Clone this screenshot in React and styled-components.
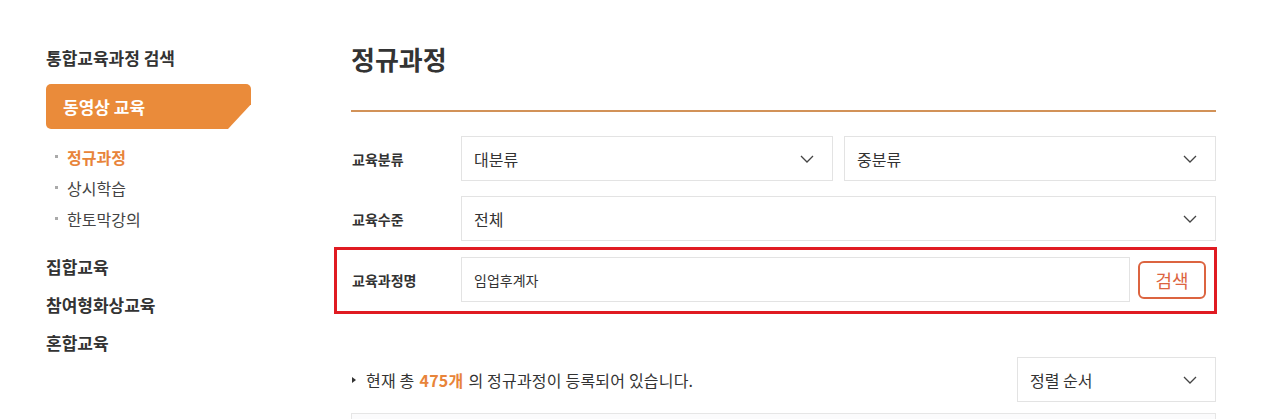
import React from "react";
import styled, { createGlobalStyle } from "styled-components";

const GlobalStyle = createGlobalStyle`
  html, body {
    margin: 0;
    padding: 0;
    background: #fff;
    font-family: "Noto Sans CJK KR", "Noto Sans", sans-serif;
    color: #333;
  }
  * { box-sizing: border-box; }
`;

const Page = styled.div`
  display: flex;
  padding: 40px 0 0 46px;
  height: 419px;
  overflow: hidden;
`;

const Sidebar = styled.aside`
  width: 305px;
  flex-shrink: 0;
`;

const SideTitle = styled.div`
  font-size: 17px;
  font-weight: 700;
  color: #333;
  line-height: 36px;
`;

const ActiveMenu = styled.div`
  width: 205px;
  height: 45px;
  margin-top: 8px;
  padding-left: 17px;
  display: flex;
  align-items: center;
  background: #ea8b3a;
  color: #fff;
  font-size: 17px;
  font-weight: 700;
  border-radius: 5px;
  clip-path: polygon(0 0, 100% 0, 100% 45%, calc(100% - 23px) 100%, 0 100%);
`;

const SubList = styled.ul`
  list-style: none;
  margin: 12px 0 14px;
  padding: 0 0 0 9px;
`;

const SubItem = styled.li`
  display: flex;
  align-items: center;
  height: 31px;
  font-size: 16px;
  font-weight: ${(p) => (p.$active ? 700 : 400)};
  color: ${(p) => (p.$active ? "#e8843a" : "#444")};

  &::before {
    content: "";
    width: 3px;
    height: 3px;
    background: #aaa;
    margin-right: 9px;
  }
`;

const MenuItem = styled.div`
  font-size: 17px;
  font-weight: 700;
  color: #333;
  line-height: 38px;
`;

const Main = styled.main`
  width: 865px;
  flex-shrink: 0;
`;

const Title = styled.h2`
  margin: 0;
  font-size: 26px;
  font-weight: 700;
  color: #333;
  line-height: 38px;
  padding-bottom: 32px;
  border-bottom: 2px solid #d29258;
`;

const Form = styled.div`
  display: flex;
  flex-direction: column;
  gap: 15px;
  margin-top: 24px;
`;

const Row = styled.div`
  display: flex;
  align-items: center;
`;

const HighlightRow = styled(Row)`
  margin: -9px -1px 0 -17px;
  padding: 7px 8px 9px 14px;
  border: 3px solid #e01b22;
`;

const Label = styled.div`
  width: 110px;
  flex-shrink: 0;
  padding-left: 1px;
  font-size: 14px;
  font-weight: 700;
  color: #333;
`;

const Fields = styled.div`
  flex: 1;
  display: grid;
  grid-template-columns: ${(p) => (p.$split ? "1fr 1fr" : "1fr")};
  gap: 11px;
`;

const SelectBox = styled.div`
  height: 45px;
  width: ${(p) => p.$width || "auto"};
  border: 1px solid #e3e3e3;
  display: flex;
  align-items: center;
  justify-content: space-between;
  padding: 0 18px 0 12px;
  font-size: 16px;
  color: #333;
  background: #fff;
`;

const Input = styled.div`
  flex: 1;
  height: 45px;
  border: 1px solid #e3e3e3;
  display: flex;
  align-items: center;
  padding-left: 12px;
  font-size: 14px;
  color: #333;
`;

const SearchButton = styled.button`
  width: 68px;
  height: 38px;
  margin-left: 8px;
  border: 2px solid #dc6440;
  border-radius: 6px;
  background: #fff;
  color: #dc6440;
  font-family: inherit;
  font-size: 18px;
  padding: 0;
  cursor: pointer;
`;

const CountBar = styled.div`
  display: flex;
  align-items: center;
  justify-content: space-between;
  margin-top: 43px;
`;

const CountText = styled.div`
  display: flex;
  align-items: center;
  font-size: 16px;
  color: #333;
  letter-spacing: 0.2px;

  &::before {
    content: "";
    border-left: 4px solid #333;
    border-top: 3.5px solid transparent;
    border-bottom: 3.5px solid transparent;
    margin: 0 10px 0 1px;
  }
`;

const Strong = styled.b`
  color: #e8843a;
  font-weight: 700;
  margin: 0 5px;
`;

const ListBox = styled.div`
  margin-top: 11px;
  height: 60px;
  border: 1px solid #e6e6e6;
  background: #fbfbfc;
`;

const Chevron = () => (
  <svg width="14" height="8" viewBox="0 0 14 8" fill="none">
    <polyline points="1,1 7,7 13,1" stroke="#444" strokeWidth="1.3" />
  </svg>
);

const Select = ({ children, width }) => (
  <SelectBox $width={width}>
    <span>{children}</span>
    <Chevron />
  </SelectBox>
);

export default function App() {
  return (
    <>
      <GlobalStyle />
      <Page>
        <Sidebar>
          <SideTitle>통합교육과정 검색</SideTitle>
          <ActiveMenu>동영상 교육</ActiveMenu>
          <SubList>
            <SubItem $active>정규과정</SubItem>
            <SubItem>상시학습</SubItem>
            <SubItem>한토막강의</SubItem>
          </SubList>
          <MenuItem>집합교육</MenuItem>
          <MenuItem>참여형화상교육</MenuItem>
          <MenuItem>혼합교육</MenuItem>
        </Sidebar>
        <Main>
          <Title>정규과정</Title>
          <Form>
            <Row>
              <Label>교육분류</Label>
              <Fields $split>
                <Select>대분류</Select>
                <Select>중분류</Select>
              </Fields>
            </Row>
            <Row>
              <Label>교육수준</Label>
              <Fields>
                <Select>전체</Select>
              </Fields>
            </Row>
            <HighlightRow>
              <Label>교육과정명</Label>
              <Input>임업후계자</Input>
              <SearchButton type="button">검색</SearchButton>
            </HighlightRow>
          </Form>
          <CountBar>
            <CountText>
              현재 총<Strong>475개</Strong>의 정규과정이 등록되어 있습니다.
            </CountText>
            <Select width="199px">정렬 순서</Select>
          </CountBar>
          <ListBox />
        </Main>
      </Page>
    </>
  );
}
